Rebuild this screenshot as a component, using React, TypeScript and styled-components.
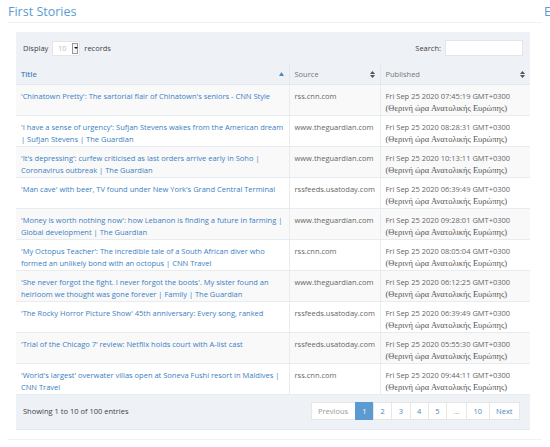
import styled, { createGlobalStyle } from 'styled-components';

const rows = [
  {
    title: "'Chinatown Pretty': The sartorial flair of Chinatown's seniors - CNN Style",
    source: 'rss.cnn.com',
    time: '07:45:19',
  },
  {
    title: "'I have a sense of urgency': Sufjan Stevens wakes from the American dream | Sufjan Stevens | The Guardian",
    source: 'www.theguardian.com',
    time: '08:28:31',
  },
  {
    title: "'It's depressing': curfew criticised as last orders arrive early in Soho | Coronavirus outbreak | The Guardian",
    source: 'www.theguardian.com',
    time: '10:13:11',
  },
  {
    title: "'Man cave' with beer, TV found under New York's Grand Central Terminal",
    source: 'rssfeeds.usatoday.com',
    time: '06:39:49',
  },
  {
    title: "'Money is worth nothing now': how Lebanon is finding a future in farming | Global development | The Guardian",
    source: 'www.theguardian.com',
    time: '09:28:01',
  },
  {
    title: "'My Octopus Teacher': The incredible tale of a South African diver who formed an unlikely bond with an octopus | CNN Travel",
    source: 'rss.cnn.com',
    time: '08:05:04',
  },
  {
    title: "'She never forgot the fight. I never forgot the boots'. My sister found an heirloom we thought was gone forever | Family | The Guardian",
    source: 'www.theguardian.com',
    time: '06:12:25',
  },
  {
    title: "'The Rocky Horror Picture Show' 45th anniversary: Every song, ranked",
    source: 'rssfeeds.usatoday.com',
    time: '06:39:49',
  },
  {
    title: "'Trial of the Chicago 7' review: Netflix holds court with A-list cast",
    source: 'rssfeeds.usatoday.com',
    time: '05:55:30',
  },
  {
    title: "'World's largest' overwater villas open at Soneva Fushi resort in Maldives | CNN Travel",
    source: 'rss.cnn.com',
    time: '09:44:11',
  },
];

const pages = ['1', '2', '3', '4', '5', '…', '10'];

const GlobalStyle = createGlobalStyle`
  body {
    margin: 0;
    background: #fff;
    font-family: "Open Sans", "Liberation Sans", sans-serif;
    color: #555;
  }
`;

const SortBoth = () => (
  <svg width="5" height="7" viewBox="0 0 5 7">
    <path d="M0 3 L2.5 0 L5 3 Z M0 4 L2.5 7 L5 4 Z" fill="#555" />
  </svg>
);

const SortUp = () => (
  <svg width="5" height="4" viewBox="0 0 5 4">
    <path d="M0 4 L2.5 0 L5 4 Z" fill="#4a88c4" />
  </svg>
);

const App = () => {
  return (
    <Page>
      <GlobalStyle />
      <TitleBar>
        <Heading>First Stories</Heading>
        <Edge>E</Edge>
      </TitleBar>
      <Panel>
        <Controls>
          <Label>
            Display
            <Select>
              <SelectValue>10</SelectValue>
              <SelectArrow />
            </Select>
            records
          </Label>
          <Label>
            Search:
            <SearchInput />
          </Label>
        </Controls>
        <Table>
          <colgroup>
            <col style={{ width: 273 }} />
            <col style={{ width: 91 }} />
            <col style={{ width: 150 }} />
          </colgroup>
          <thead>
            <tr>
              <Th $active>
                <ThInner>
                  Title
                  <SortUp />
                </ThInner>
              </Th>
              <Th>
                <ThInner>
                  Source
                  <SortBoth />
                </ThInner>
              </Th>
              <Th>
                <ThInner>
                  Published
                  <SortBoth />
                </ThInner>
              </Th>
            </tr>
          </thead>
          <tbody>
            {rows.map((r, i) => (
              <Tr key={i} $odd={i % 2 === 0}>
                <Td>
                  <Link>{r.title}</Link>
                </Td>
                <Td>{r.source}</Td>
                <Td>
                  Fri Sep 25 2020 {r.time} GMT+0300
                  <br />
                  <Greek>(Θερινή ώρα Ανατολικής Ευρώπης)</Greek>
                </Td>
              </Tr>
            ))}
          </tbody>
        </Table>
        <Footer>
          <Info>Showing 1 to 10 of 100 entries</Info>
          <Pager>
            <PageBtn $muted>Previous</PageBtn>
            {pages.map((p) => (
              <PageBtn key={p} $active={p === '1'} $muted={p === '…'}>
                {p}
              </PageBtn>
            ))}
            <PageBtn>Next</PageBtn>
          </Pager>
        </Footer>
      </Panel>
      <Divider />
    </Page>
  );
};

const Page = styled.div`
  width: 550px;
  height: 447px;
  overflow: hidden;
  padding: 0 0 0 8px;
  box-sizing: border-box;
`;

const TitleBar = styled.div`
  display: flex;
  justify-content: space-between;
  align-items: flex-end;
  height: 22px;
  border-bottom: 1px solid #eef1f5;
  margin-right: 8px;
`;

const Heading = styled.div`
  font-size: 12.5px;
  color: #5b9bd1;
  line-height: 16px;
  padding-bottom: 2px;
`;

const Edge = styled.div`
  font-size: 12.5px;
  color: #5b9bd1;
  line-height: 16px;
  padding-bottom: 2px;
  margin-right: -9px;
`;

const Panel = styled.div`
  margin: 9px 12px 0 8px;
  width: 514px;
  background: #eef1f5;
  border-bottom: 1px solid #e3e8ee;
`;

const Controls = styled.div`
  display: flex;
  justify-content: space-between;
  align-items: center;
  height: 32px;
  padding: 0 7px;
`;

const Label = styled.div`
  display: flex;
  align-items: center;
  gap: 4px;
  font-size: 7.5px;
  color: #444;
`;

const Select = styled.div`
  display: flex;
  align-items: center;
  justify-content: space-between;
  width: 28px;
  height: 15px;
  background: #fff;
  border: 1px solid #e5e5e5;
  box-sizing: border-box;
  padding: 0 1px 0 5px;
`;

const SelectValue = styled.span`
  color: #bbb;
  font-size: 7px;
`;

const SelectArrow = styled.span`
  width: 6px;
  height: 11px;
  border: 1px solid #999;
  box-sizing: border-box;
  background: #f4f4f4;
  position: relative;
  &::after {
    content: '';
    position: absolute;
    left: 0.5px;
    top: 3.5px;
    border-left: 2px solid transparent;
    border-right: 2px solid transparent;
    border-top: 2.5px solid #111;
  }
`;

const SearchInput = styled.div`
  width: 78px;
  height: 16px;
  background: #fff;
  border: 1px solid #e5e5e5;
  box-sizing: border-box;
`;

const Table = styled.table`
  width: 514px;
  table-layout: fixed;
  border-collapse: collapse;
  font-size: 7.5px;
`;

const Th = styled.th<{ $active?: boolean }>`
  height: 20px;
  padding: 0 5px;
  text-align: left;
  font-weight: ${(p) => (p.$active ? 600 : 400)};
  color: ${(p) => (p.$active ? '#4a88c4' : '#777')};
  background: #eef1f5;
  border-left: 1px solid #e3e8ee;
  border-bottom: 1px solid #e3e8ee;
  &:first-child {
    border-left: none;
  }
`;

const ThInner = styled.div`
  display: flex;
  justify-content: space-between;
  align-items: center;
`;

const Tr = styled.tr<{ $odd?: boolean }>`
  background: ${(p) => (p.$odd ? '#f9f9f9' : '#fff')};
`;

const Td = styled.td`
  height: 30px;
  padding: 5px 5px 1px;
  box-sizing: border-box;
  vertical-align: top;
  line-height: 12px;
  color: #666;
  border-top: 1px solid #e7ecf1;
  border-left: 1px solid #e7ecf1;
  &:first-child {
    border-left: none;
  }
`;

const Link = styled.span`
  color: #3a80c2;
`;

const Greek = styled.span`
  font-family: "Liberation Serif", "DejaVu Serif", serif;
  font-size: 8.5px;
  color: #555;
`;

const Footer = styled.div`
  display: flex;
  justify-content: space-between;
  align-items: flex-start;
  height: 35px;
  padding: 7px 10px 0 7px;
  box-sizing: border-box;
  border-top: 1px solid #e7ecf1;
`;

const Info = styled.div`
  font-size: 7.5px;
  color: #444;
  padding-top: 4px;
`;

const Pager = styled.div`
  display: flex;
`;

const PageBtn = styled.div<{ $active?: boolean; $muted?: boolean }>`
  height: 18px;
  min-width: 19px;
  padding: 0 6.5px;
  box-sizing: border-box;
  display: flex;
  align-items: center;
  justify-content: center;
  font-size: 7.5px;
  background: ${(p) => (p.$active ? '#5b9bd1' : '#fff')};
  color: ${(p) => (p.$active ? '#fff' : p.$muted ? '#999' : '#4a88c4')};
  border: 1px solid ${(p) => (p.$active ? '#5b9bd1' : '#e6e6e6')};
  margin-left: -1px;
`;

const Divider = styled.div`
  margin: 9px 8px 0 0;
  border-top: 1px solid #eef1f5;
`;

export default App;
